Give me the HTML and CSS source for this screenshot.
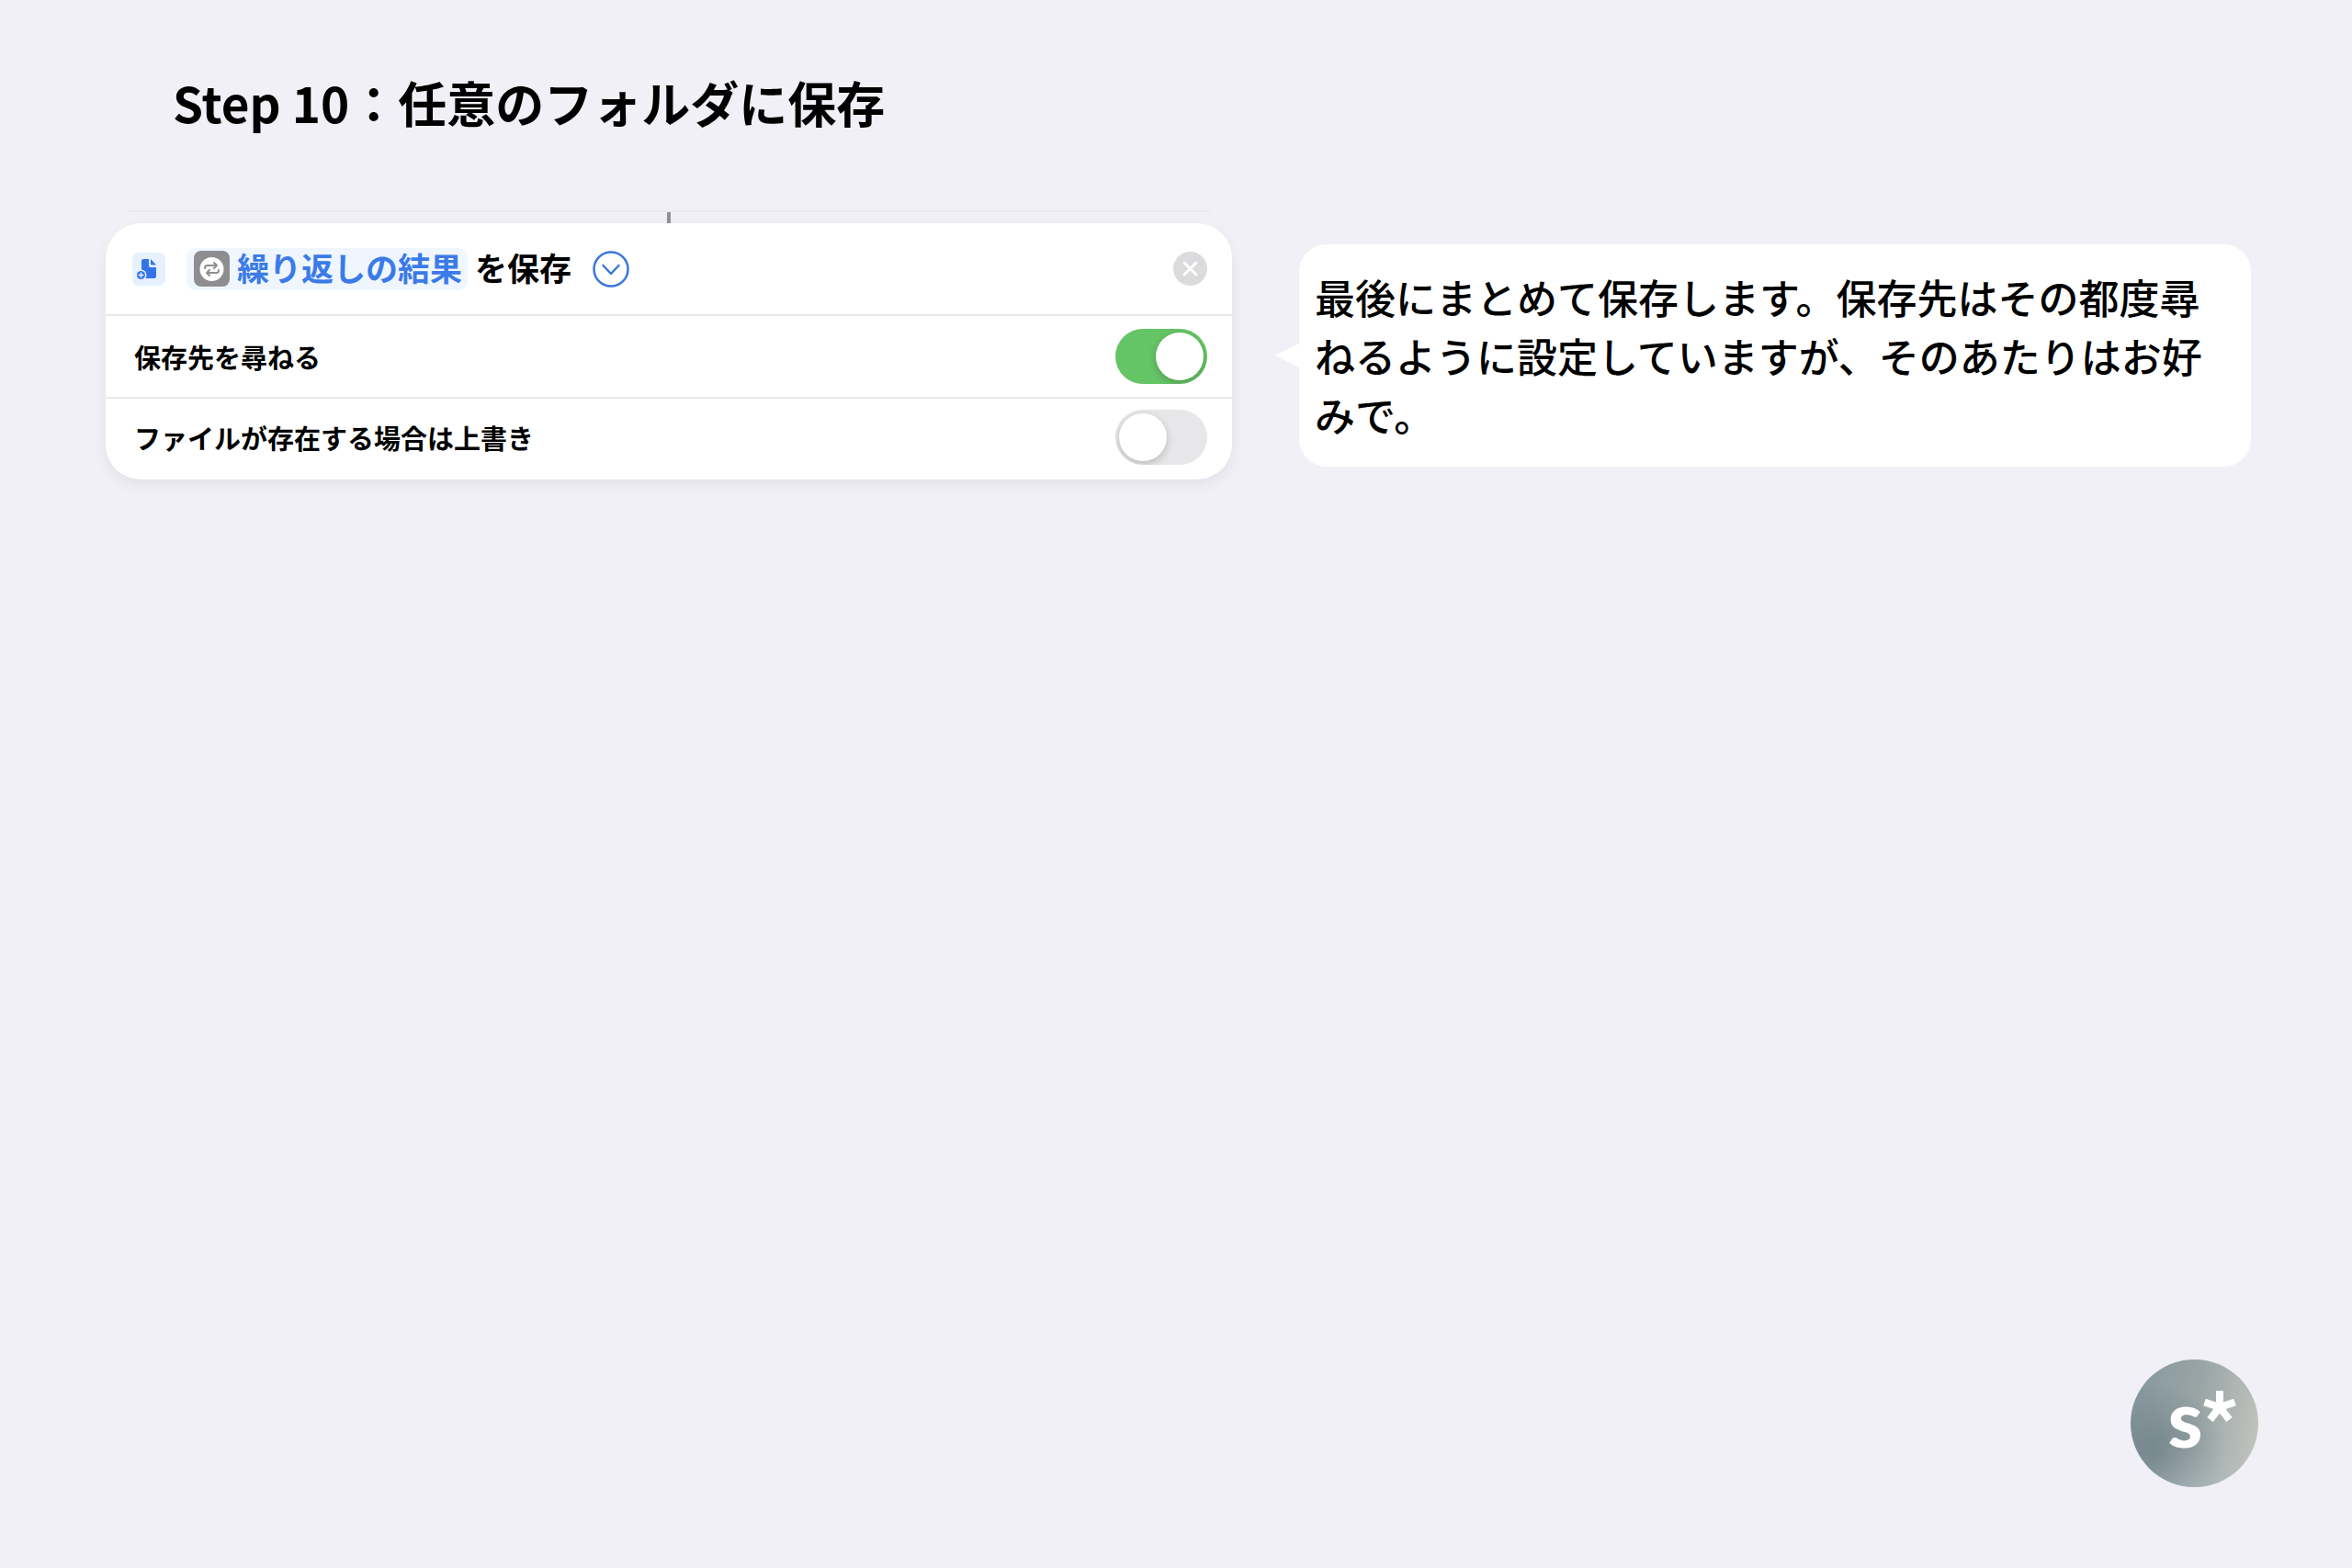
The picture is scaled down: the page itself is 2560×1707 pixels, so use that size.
FILE: index.html
```html
<!doctype html>
<html lang="ja">

<head>
    <meta charset="utf-8">
    <meta name="viewport" content="width=device-width, initial-scale=1">
    <title>Step 10：任意のフォルダに保存</title>
    <link rel="stylesheet" href="styles.css">
</head>

<body>
    <main class="page">
        <h1 class="title">Step 10：任意のフォルダに保存</h1>

        <div class="step">
            <section class="action">
                <div class="connector"></div>

                <div class="card">
                    <div class="card-header">
                        <svg class="file-icon" viewBox="0 0 36 36" aria-hidden="true">
                            <rect width="36" height="36" rx="7" fill="#e6f0fe" />
                            <path d="M12 7h6v7q0 2 2 2h6v10q0 2-2 2H12q-2 0-2-2V9q0-2 2-2z" fill="#3474e8" />
                            <path d="M20 7l6 6.500h-5q-1 0-1-1z" fill="#3474e8" />
                            <circle cx="9.500" cy="24.500" r="6" fill="#e6f0fe" />
                            <circle cx="9.500" cy="24.500" r="4.500" fill="#3474e8" />
                            <path d="M9.500 21.500v6M6.500 24.500h6" stroke="#e6f0fe" stroke-width="1.500" />
                        </svg>
                        <button class="token" type="button">
                            <svg class="repeat-icon" viewBox="0 0 39 39" aria-hidden="true">
                                <rect width="39" height="39" rx="8" fill="#8e8e90" />
                                <circle cx="19.500" cy="20" r="13" fill="#fff" />
                                <g fill="none" stroke="#8e8e90" stroke-width="2" stroke-linecap="round" stroke-linejoin="round">
                                    <path d="M12 19v-.5q0-2.500 2.500-2.500h10M22 13l3 3-3 3" />
                                    <path d="M27 21v.5q0 2.500-2.500 2.500h-10M17 21l-3 3 3 3" />
                                </g>
                            </svg>
                            <span class="phrase">繰り返しの結果</span>
                        </button>
                        <span class="phrase verb">を保存</span>
                        <button class="icon-button expand" type="button" aria-label="詳細">
                            <svg class="expand-icon" viewBox="0 0 40 40" fill="none" stroke="#3b77dc" stroke-linecap="round" stroke-linejoin="round">
                                <circle cx="20" cy="20" r="18.500" stroke-width="2.500" />
                                <path d="M11.500 16l8.500 9 8.500-9" stroke-width="2.500" />
                            </svg>
                        </button>
                        <button class="icon-button close" type="button" aria-label="削除">
                            <svg class="close-icon" viewBox="0 0 37 37">
                                <circle cx="18.500" cy="18.500" r="18.500" fill="#dbdbdd" />
                                <path d="M12 12l13 13M25 12l-13 13" stroke="#fff" stroke-width="3" stroke-linecap="round" />
                            </svg>
                        </button>
                    </div>

                    <div class="row">
                        <label for="ask">保存先を尋ねる</label>
                        <input class="toggle" id="ask" type="checkbox" checked>
                    </div>

                    <div class="row">
                        <label for="overwrite">ファイルが存在する場合は上書き</label>
                        <input class="toggle" id="overwrite" type="checkbox">
                    </div>
                </div>
            </section>

            <p class="bubble">最後にまとめて保存します。保存先はその都度尋ねるように設定していますが、そのあたりはお好みで。</p>
        </div>

        <footer class="logo"><span class="logo-letter">s</span><svg class="logo-star" viewBox="0 0 36 34" aria-hidden="true">
                <path d="M18 18V0M18 18L1.500 12.500M18 18l16.500-5.500M18 18L7.500 31.500M18 18l10.500 13.500" stroke="#fff" stroke-width="8" />
            </svg></footer>
    </main>
</body>

</html>
```

FILE: styles.css
```css
* {
    box-sizing: border-box;
}

body {
    margin: 0;
    background-color: #f1f0f6;
    color: #000;
    font-family: "Noto Sans CJK JP", sans-serif;
}

.page {
    display: flex;
    flex-direction: column;
    min-height: 100vh;
    padding: 72px 110px 88px 115px;
}

.title {
    margin: 0 73px;
    font-size: 53px;
    line-height: 78px;
}

.step {
    display: grid;
    grid-template-columns: 1226fr 1036fr;
    gap: 73px;
    align-items: start;
    margin-top: 79px;
}

/* the line that joins this action to the one above */
.connector {
    height: 14px;
    margin: 0 24px;
    border-top: 2px solid #eae9ee;
    background: linear-gradient(#909095, #909095) 50% 0 / 4px 100% no-repeat;
}

.card {
    border-radius: 38px;
    background-color: #fff;
    box-shadow: 0 6px 14px rgba(60, 60, 90, 0.08);
    font-weight: bold;
}

.card-header {
    display: flex;
    align-items: center;
    height: 99px;
    padding: 0 27px 0 29px;
    font-size: 35px;
}

.file-icon {
    width: 36px;
    height: 36px;
}

.token {
    display: flex;
    align-items: center;
    gap: 8px;
    height: 46px;
    margin-left: 23px;
    padding: 0 6px 0 8px;
    border: none;
    border-radius: 10px;
    background-color: #f0f6fe;
    color: #3b7be8;
    font: inherit;
}

.repeat-icon {
    width: 39px;
    height: 39px;
}

.phrase {
    padding-bottom: 4px;
}

.verb {
    margin-left: 8px;
}

.icon-button {
    display: flex;
    padding: 0;
    border: none;
    background: none;
}

.expand {
    margin-left: 23px;
}

.expand-icon {
    width: 40px;
    height: 40px;
}

.close {
    margin-left: auto;
}

.close-icon {
    width: 37px;
    height: 37px;
}

.row {
    display: flex;
    align-items: center;
    justify-content: space-between;
    height: 90px;
    padding: 0 27px 0 31px;
    border-top: 2px solid #e8e8e9;
    font-size: 29px;
}

.row:last-child {
    padding-bottom: 4px;
}

.toggle {
    appearance: none;
    width: 100px;
    height: 60px;
    margin: 0;
    padding: 4px;
    border-radius: 30px;
    background-color: #e7e7e9;
    overflow: hidden;
}

.toggle::before {
    content: "";
    display: block;
    width: 52px;
    height: 52px;
    border-radius: 50%;
    background-color: #fff;
    box-shadow: 0 3px 8px rgba(0, 0, 0, 0.2);
}

.toggle:checked {
    background-color: #65c466;
}

.toggle:checked::before {
    margin-left: auto;
}

.bubble {
    position: relative;
    margin: 37px 0 0;
    padding: 25px 17px;
    border-radius: 30px;
    background-color: #fff;
    font-size: 44px;
    font-weight: 500;
    line-height: 64px;
}

.bubble::before {
    content: "";
    position: absolute;
    top: 50%;
    right: 100%;
    border: solid transparent;
    border-width: 13px 26px 13px 0;
    border-right-color: #fff;
    transform: translateY(-50%);
}

.logo {
    display: flex;
    align-items: center;
    justify-content: center;
    align-self: flex-end;
    width: 139px;
    height: 139px;
    margin: auto -8px 0 0;
    padding-left: 16px;
    border-radius: 50%;
    background:
        radial-gradient(circle at 20% 72%, rgba(92, 112, 118, 0.5), transparent 50%),
        radial-gradient(circle at 45% 105%, rgba(178, 190, 197, 0.8), transparent 40%),
        linear-gradient(100deg, #84989e, #9aa5a6 50%, #c6c7c1);
    color: #fff;
}

.logo-letter {
    padding-bottom: 14px;
    font-family: Lato, sans-serif;
    font-size: 86px;
    font-weight: 900;
    line-height: 86px;
}

.logo-star {
    width: 36px;
    height: 34px;
    margin-bottom: 38px;
}
```
